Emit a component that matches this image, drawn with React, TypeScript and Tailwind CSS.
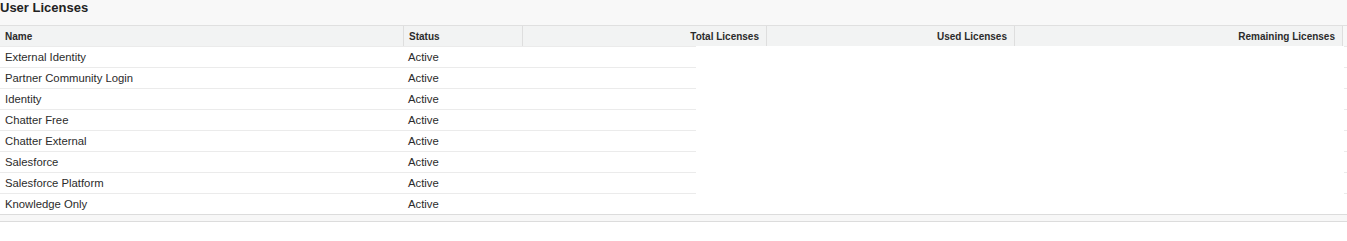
const licenses = [
  "External Identity",
  "Partner Community Login",
  "Identity",
  "Chatter Free",
  "Chatter External",
  "Salesforce",
  "Salesforce Platform",
  "Knowledge Only",
];

const UserLicenses = () => {
  return (
    <div className="w-[1347px] bg-white font-['Liberation_Sans',Arial,sans-serif] text-[#222]">
      <div className="h-[25px] bg-[#f8f8f8] pt-[1px]">
        <h3 className="text-[13px] font-bold leading-[13px]">User Licenses</h3>
      </div>

      <div className="flex h-[21px] items-center border-t border-[#e0e0e0] bg-[#f2f3f3] text-[10px] font-bold text-[#2b2b2b]">
        <div className="w-[403px] pl-[5px]">Name</div>
        <div className="flex h-full w-[119px] items-center border-l border-[#dedede] pl-[5px]">
          Status
        </div>
        <div className="flex h-full w-[244px] items-center justify-end border-l border-[#dedede] pr-[7px]">
          Total Licenses
        </div>
        <div className="flex h-full w-[248px] items-center justify-end border-l border-[#dedede] pr-[7px]">
          Used Licenses
        </div>
        <div className="flex h-full w-[328px] items-center justify-end border-l border-[#dedede] pr-[7px]">
          Remaining Licenses
        </div>
        <div className="h-full flex-1 border-l border-[#dedede] bg-[#f8f8f8]"></div>
      </div>

      {licenses.map((name) => (
        <div key={name} className="flex h-[21px] text-[11.3px] text-[#2b2b2b]">
          <div className="flex w-[696px] items-center border-t border-[#ebebeb]">
            <div className="w-[403px] pl-[5px]">{name}</div>
            <div className="pl-[5px]">Active</div>
          </div>
          <div className="flex-1"></div>
          <div className="w-[3px] border-t border-[#ebebeb]"></div>
        </div>
      ))}

      <div className="h-[8px] border-y border-[#dcdcdc] bg-[#f7f7f7]"></div>
    </div>
  );
};

export default function App() {
  return <UserLicenses />;
}
